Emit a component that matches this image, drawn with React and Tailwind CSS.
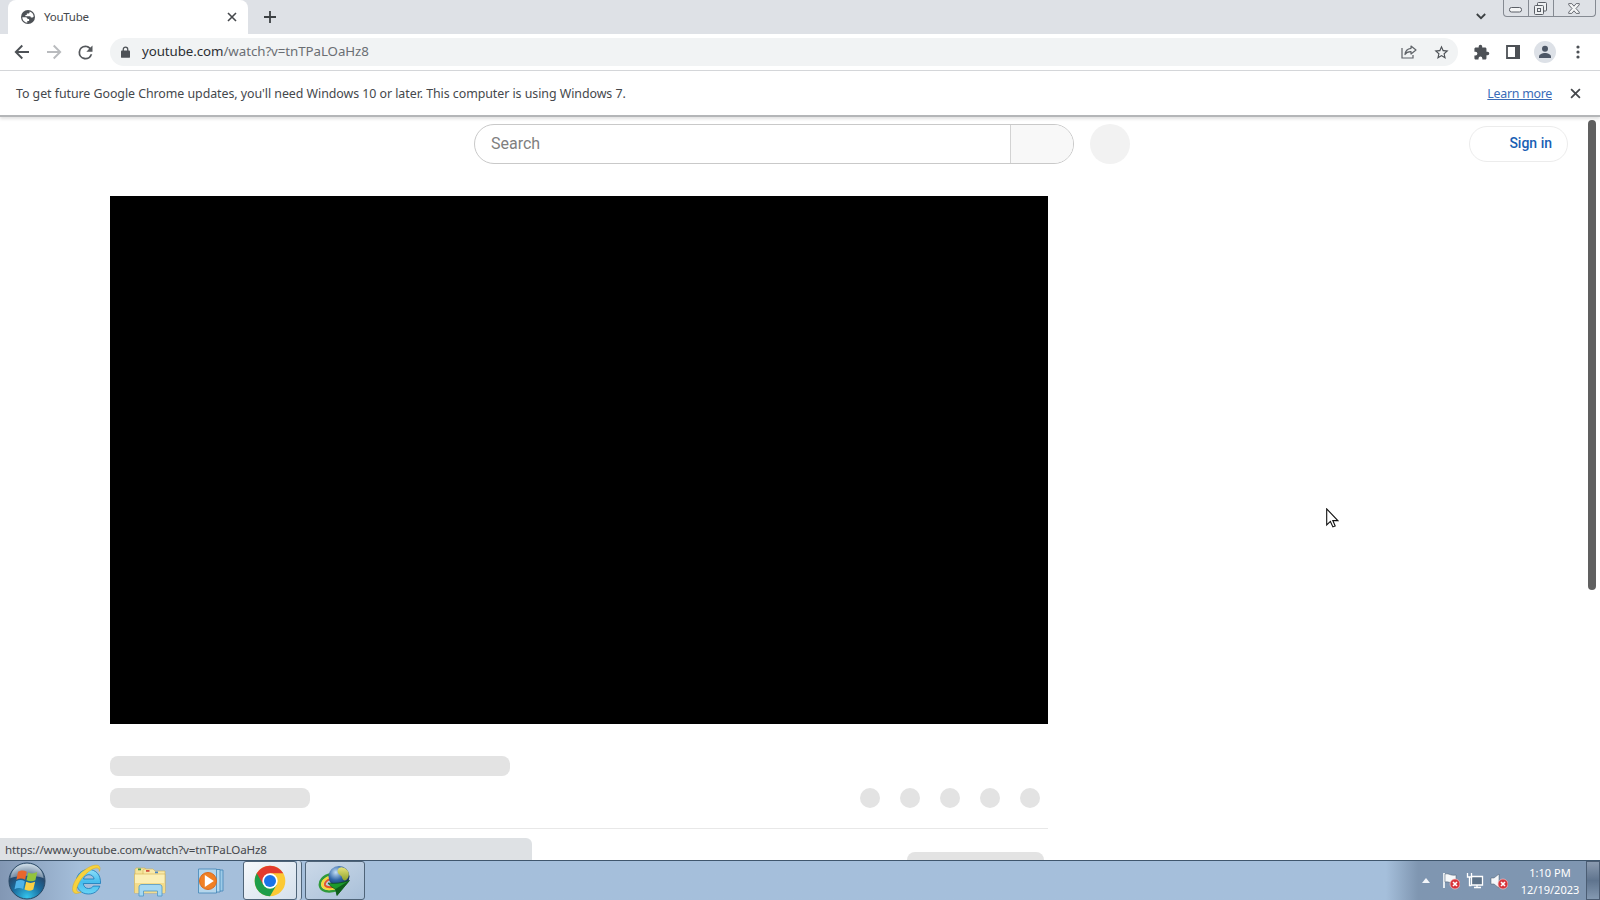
import React from 'react'

const omniText = 'whitespace-nowrap font-["Noto_Sans","Open_Sans",sans-serif]'

const GlobeIcon = () => (
  <svg viewBox="0 0 16 16" className="h-4 w-4 shrink-0">
    <circle cx="8" cy="8" r="7" fill="#4d5156" />
    <path d="M2.300 8.200h3.500c1.100 0 1.700.8 1.700 1.700h1.600v2.200H7.300v1.600C4.500 13.400 2.300 11 2.300 8.200z" fill="#fff" />
    <path d="M9.600 2.500v.7c0 .8-.6 1.300-1.400 1.300H6.800v1.400H5.400v1.400h4.200c.7 0 1.200.5 1.200 1.200h1.400c.7 0 1.200-.4 1.500-1C13.500 5 11.900 3.100 9.600 2.500z" fill="#fff" />
  </svg>
)

const BackIcon = ({ className }) => (
  <svg viewBox="0 0 16 16" className={className} fill="none" stroke="currentColor" strokeWidth="1.900">
    <path d="M15 8H2M8.300 1.500 1.800 8l6.500 6.500" />
  </svg>
)

const ReloadIcon = () => (
  <svg viewBox="0 0 24 24" className="h-[21px] w-[21px] text-[#55585c]" fill="currentColor">
    <path d="M17.650 6.350A7.958 7.958 0 0 0 12 4a8 8 0 1 0 7.730 10h-2.080A6 6 0 1 1 12 6c1.660 0 3.140.690 4.220 1.780L13 11h7V4l-2.350 2.350z" />
  </svg>
)

const LockIcon = () => (
  <svg viewBox="0 0 10 13" className="h-3 w-[9px]">
    <path d="M2.500 6V3.600a2.500 2.500 0 0 1 5 0V6" fill="none" stroke="#4d5156" strokeWidth="1.400" />
    <rect x="0" y="4.800" width="10" height="8.200" rx="1" fill="#4d5156" />
  </svg>
)

const ShareIcon = () => (
  <svg viewBox="0 0 16 14" className="h-[14px] w-4" fill="none" stroke="#5f6368" strokeWidth="1.200">
    <path d="M1 3v10h11v-3" />
    <path d="M10 1l5 4-5 4V6.600C7 6.500 5.200 7.500 4 9.500 4.300 6 6.500 3.700 10 3.300z" strokeLinejoin="round" />
  </svg>
)

const StarIcon = () => (
  <svg viewBox="0 0 24 24" className="h-[17px] w-[17px]" fill="#4d5156">
    <path d="M22 9.240l-7.190-.62L12 2 9.190 8.630 2 9.240l5.460 4.730L5.820 21 12 17.270 18.180 21l-1.630-7.030L22 9.240zM12 15.400l-3.760 2.270 1-4.280-3.320-2.880 4.380-.38L12 6.100l1.710 4.040 4.380.38-3.320 2.880 1 4.280L12 15.400z" />
  </svg>
)

const PuzzleIcon = () => (
  <svg viewBox="0 0 24 24" className="h-[17px] w-[17px]" fill="#4d5156">
    <path d="M20.500 11H19V7c0-1.100-.9-2-2-2h-4V3.500a2.500 2.500 0 0 0-5 0V5H4c-1.100 0-1.990.9-1.990 2v3.800H3.500a2.700 2.700 0 0 1 0 5.400H2V20c0 1.100.9 2 2 2h3.800v-1.500a2.700 2.700 0 0 1 5.400 0V22H17c1.100 0 2-.9 2-2v-4h1.500a2.500 2.500 0 0 0 0-5z" />
  </svg>
)

const ProfileIcon = () => (
  <svg viewBox="0 0 22 22" className="h-[22px] w-[22px]">
    <circle cx="11" cy="11" r="11" fill="#dde1e7" />
    <circle cx="11" cy="7.700" r="3" fill="#4c5665" />
    <path d="M5 17v-1.500c0-2.300 3.500-3.500 6-3.500s6 1.200 6 3.500V17z" fill="#4c5665" />
  </svg>
)

const CloseIcon = ({ className }) => (
  <svg viewBox="0 0 10 10" className={className} stroke="#45484c" strokeWidth="1.600">
    <path d="M1 1l8 8M9 1 1 9" />
  </svg>
)

const WindowControls = () => (
  <div className="flex h-[17px] w-[93px] rounded-b-[4px] border border-t-0 border-[#858a92]">
    <div className="flex w-[25px] items-center justify-center border-r border-[#858a92]">
      <svg viewBox="0 0 13 6" className="mr-px mt-1 h-[6px] w-[13px]">
        <rect x=".5" y=".5" width="12" height="4.500" rx="2" fill="#f4f5f6" stroke="#5b5f66" />
      </svg>
    </div>
    <div className="flex w-[25px] items-center justify-center border-r border-[#858a92]">
      <svg viewBox="0 0 13 13" className="mr-px h-[13px] w-[13px]" fill="#eef0f2" stroke="#5b5f66">
        <rect x="3.500" y=".5" width="9" height="8.500" rx="1" />
        <rect x=".5" y="3.500" width="9" height="9" rx="1" />
        <rect x="3.500" y="6.500" width="3" height="3" />
      </svg>
    </div>
    <div className="flex flex-1 items-center justify-center">
      <svg viewBox="0 0 12 11" className="mr-px h-[11px] w-3">
        <path d="M.7.600h3.100L6 3.200 8.200.600h3.100v1.200L8 5.500l3.300 3.700v1.200H8.200L6 7.800l-2.200 2.600H.7V9.200L4 5.500.7 1.800z" fill="#f4f5f6" stroke="#5b5f66" strokeWidth=".9" />
      </svg>
    </div>
  </div>
)

const TabStrip = () => (
  <div className="flex h-[34px] bg-[#dee1e6]">
    <div className="ml-2 flex w-[240px] items-center rounded-t-lg bg-white pl-3 pr-[11px]">
      <GlobeIcon />
      <span className={`${omniText} ml-2 flex-1 text-[11.500px] tracking-[-0.25px] text-[#45484c]`}>YouTube</span>
      <CloseIcon className="h-[10px] w-[10px]" />
    </div>
    <svg viewBox="0 0 12 12" className="ml-[16px] mt-[11px] h-3 w-3" stroke="#3c4043" strokeWidth="1.800">
      <path d="M6 0v12M0 6h12" />
    </svg>
    <div className="flex-1" />
    <svg viewBox="0 0 10 7" className="mr-[17px] mt-[13px] h-[7px] w-[10px]" fill="none" stroke="#3c4043" strokeWidth="1.800">
      <path d="M.8 1 5 5.200 9.200 1" />
    </svg>
    <WindowControls />
    <div className="w-1" />
  </div>
)

const Toolbar = () => (
  <div className="flex h-[37px] items-center border-b border-[#d5d7da] bg-white pl-[14px] pr-5">
    <BackIcon className="h-4 w-4 text-[#4d5156]" />
    <BackIcon className="ml-4 h-4 w-4 rotate-180 text-[#b9bbbe]" />
    <div className="ml-[13px]">
      <ReloadIcon />
    </div>
    <div className="ml-[14px] flex h-7 w-[1349px] items-center rounded-full bg-[#f1f3f4] pl-[11px] pr-2">
      <LockIcon />
      <span className={`${omniText} ml-[12px] flex-1 text-[13.300px] tracking-[-0.060px] text-[#6a6e73]`}>
        <span className="text-[#2c2f33]">youtube.com</span>/watch?v=tnTPaLOaHz8
      </span>
      <ShareIcon />
      <div className="ml-4">
        <StarIcon />
      </div>
    </div>
    <div className="flex flex-1 items-center pl-[15px]">
      <PuzzleIcon />
      <svg viewBox="0 0 14 14" className="ml-[16px] h-[14px] w-[14px]">
        <path d="M1 1h12v12H1z" fill="none" stroke="#4d5156" strokeWidth="1.800" />
        <path d="M9 0h5v14H9z" fill="#4d5156" />
      </svg>
      <div className="ml-[14px]">
        <ProfileIcon />
      </div>
      <svg viewBox="0 0 4 14" className="ml-5 h-[14px] w-1" fill="#4d5156">
        <circle cx="2" cy="2" r="1.600" />
        <circle cx="2" cy="7" r="1.600" />
        <circle cx="2" cy="12" r="1.600" />
      </svg>
    </div>
  </div>
)

const UpdateBar = () => (
  <div className={`${omniText} relative z-10 flex h-[46px] items-center border-b-2 border-[#b4b6b8] bg-white pl-4 pr-[19px] text-[12.400px] tracking-[-0.050px] text-[#45484c] shadow-[0_2px_3px_rgba(0,0,0,0.12)]`}>
    <span className="flex-1 pt-[2px]">
      To get future Google Chrome updates, you'll need Windows 10 or later. This computer is using Windows 7.
    </span>
    <a className="mr-[18px] pt-[2px] tracking-[-0.270px] text-[#3a6cb8] underline">Learn more</a>
    <CloseIcon className="h-[11px] w-[11px]" />
  </div>
)

const Masthead = () => (
  <div className="flex h-[79px] items-start pl-[474px] pt-[7px] font-[Roboto,sans-serif]">
    <div className="flex h-10 w-[600px] overflow-hidden rounded-full border border-[#c9c9c9]">
      <div className="flex flex-1 items-center pl-4 text-[16px] text-[#808080]">Search</div>
      <div className="w-[63px] border-l border-[#d3d3d3] bg-[#f8f8f8]" />
    </div>
    <div className="ml-4 h-10 w-10 rounded-full bg-[#f2f2f2]" />
    <div className="ml-[339px] mt-[2px] flex h-9 w-[99px] items-center justify-end rounded-full border border-[#ececec] pb-[2px] pr-[15px] text-[14px] font-medium text-[#1a5fb4]">
      Sign in
    </div>
  </div>
)

const WatchSkeleton = () => (
  <div className="ml-[110px] w-[938px]">
    <div className="h-[528px] bg-black" />
    <div className="mt-8 h-5 w-[400px] rounded-lg bg-[#e3e3e3]" />
    <div className="mt-3 flex items-center justify-between pr-2">
      <div className="h-5 w-[200px] rounded-lg bg-[#e3e3e3]" />
      <div className="flex gap-5">
        {[0, 1, 2, 3, 4].map((i) => (
          <div key={i} className="h-5 w-5 rounded-full bg-[#e3e3e3]" />
        ))}
      </div>
    </div>
    <div className="mt-5 h-px bg-[#e8e8e8]" />
    <div className="ml-[797px] mt-[23px] h-9 w-[137px] rounded-lg bg-[#e3e3e3]" />
  </div>
)

const StartOrb = () => (
  <svg viewBox="0 0 38 38" className="h-[38px] w-[38px]">
    <defs>
      <radialGradient id="orb" cx="50%" cy="95%" r="90%">
        <stop offset="0" stopColor="#35c5ec" />
        <stop offset=".45" stopColor="#1a6d9f" />
        <stop offset=".75" stopColor="#26496e" />
        <stop offset="1" stopColor="#a7bfd2" />
      </radialGradient>
    </defs>
    <circle cx="19" cy="19" r="18" fill="url(#orb)" stroke="#294763" />
    <path d="M2.500 16C4 6 12 1.800 19 1.800S34 6 35.500 16c-9-3-23-3-33 0z" fill="#fff" opacity=".38" />
    <path d="M10 9.800c3.500-2 6-1.700 8.800 0l-1.700 7.900c-2.900-1.600-5.500-1.600-8.700.1z" fill="#e8662c" />
    <path d="M20.200 10.400c2.900 1.600 5.700 1.400 9-.3l-1.800 8.100c-3 1.600-5.900 1.500-8.900 0z" fill="#93c43c" />
    <path d="M8.100 19.300c3.300-1.800 5.800-1.700 8.700 0L15.100 27c-2.900-1.500-5.500-1.500-8.600.2z" fill="#4fb2e8" />
    <path d="M18.100 19.800c3 1.500 5.900 1.500 9 0l-1.800 7.800c-3 1.600-5.800 1.500-8.800 0z" fill="#fbd044" />
  </svg>
)

const ExplorerE = () => (
  <svg viewBox="0 0 32 32" className="h-8 w-8">
    <defs>
      <linearGradient id="ie" x1="0" y1="0" x2="0" y2="1">
        <stop offset="0" stopColor="#8fe0fa" />
        <stop offset=".5" stopColor="#47bdee" />
        <stop offset="1" stopColor="#69d3f5" />
      </linearGradient>
    </defs>
    <path d="M29.500 19.500H12.300c.3 3.300 2.500 5 5.200 5 2.300 0 3.900-1 4.700-2.400h6.600C27 27.400 22.700 30 17.400 30 10.300 30 5.300 24.800 5.300 17.800S10.300 5.500 17.500 5.500c7.600 0 12.500 5.500 12 14zM12.500 15h10.600c-.4-2.700-2.500-4.300-5.200-4.300-2.800 0-4.800 1.600-5.400 4.300z" fill="url(#ie)" stroke="#1878b8" strokeWidth=".8" />
    <path d="M28.300 7.500C31 .8 25.600-.8 17.600 3.400 9 8 2.200 17 1.600 24.300c-.4 5.400 3.600 6.400 8.600 3.700-4 .8-5.200-1.200-4.100-4.800C8 17.200 13 10.500 19.600 6.200c5.200-3.300 9.200-3.200 8.700 1.300z" fill="#f7d23e" stroke="#d9a81c" strokeWidth=".5" />
  </svg>
)

const FolderIcon = () => (
  <svg viewBox="0 0 34 32" className="h-8 w-[34px]">
    <path d="M2 4.500 3 3h9l1.500 2H17v22H2z" fill="#f5e39a" stroke="#cfae55" strokeWidth=".6" />
    <path d="M10 5.500 11 4h9l2 2h10v20H10z" fill="#f8e9a8" stroke="#cfae55" strokeWidth=".6" />
    <path d="M5 3.500h3v1.800H5z" fill="#3f9a4a" />
    <path d="M13 5h3.500v1.800H13z" fill="#d1503b" />
    <path d="M22 6.500h3v1.800h-3z" fill="#4a86c4" />
    <path d="M1.500 9h30.500v19H1.500z" fill="#fbefb6" stroke="#d3b04d" strokeWidth=".6" />
    <path d="M2 18h30v9.500H2z" fill="#f4dc8a" />
    <path d="M6 31v-9c0-1.500 1-2.500 3-2.500h17c2 0 3 1 3 2.500v9h-4.500v-5h-14v5z" fill="#a5d8f2" stroke="#4f97c6" strokeWidth=".8" />
  </svg>
)

const MediaIcon = () => (
  <svg viewBox="0 0 28 28" className="h-7 w-7">
    <path d="M8 3h18v21H8z" fill="#9dcbe8" stroke="#4187b8" strokeWidth=".8" />
    <path d="M5 2.500h18V25H5z" fill="#b8daef" stroke="#4187b8" strokeWidth=".8" />
    <path d="M1.500 2h18v24h-18z" fill="#b5d6ec" stroke="#4187b8" strokeWidth=".8" />
    <circle cx="11" cy="14" r="8.500" fill="#f08024" stroke="#dc6a1c" />
    <path d="M7.800 8v12l9-6z" fill="#fff" />
  </svg>
)

const ChromeIcon = () => (
  <svg viewBox="0 0 48 48" className="h-8 w-8">
    <circle cx="24" cy="24" r="23" fill="#fcc934" />
    <path d="M24 24 4.100 12.500A23 23 0 0 0 24 47l10-17.300z" fill="#1e9e4a" />
    <path d="M4.100 12.500A23 23 0 0 1 43.900 12.500H24L14 29.700z" fill="#e33b2e" />
    <circle cx="24" cy="24" r="11.500" fill="#fff" />
    <circle cx="24" cy="24" r="9" fill="#1a73e8" />
  </svg>
)

const DownloadManagerIcon = () => (
  <svg viewBox="0 0 34 32" className="h-8 w-[34px]">
    <defs>
      <radialGradient id="globe" cx="35%" cy="30%" r="75%">
        <stop offset="0" stopColor="#c4dff6" />
        <stop offset=".5" stopColor="#3267a8" />
        <stop offset="1" stopColor="#10284f" />
      </radialGradient>
      <linearGradient id="land" x1="0" y1="0" x2="0" y2="1">
        <stop offset="0" stopColor="#e6e27a" />
        <stop offset="1" stopColor="#8ea32c" />
      </linearGradient>
    </defs>
    <path d="M13 9C5 11 1 16 2 21c1 5 8 7 17 4" fill="none" stroke="#2f9a3a" strokeWidth="2.500" />
    <path d="M13 11.500C7 13 3.500 17 4.500 20.500c1 3.500 7 4.500 13 2.500" fill="none" stroke="#f5d93a" strokeWidth="2.500" />
    <path d="M13 14c-4 1-6.500 3.500-6 6 .5 2 5 3 10 1.500" fill="none" stroke="#e2542c" strokeWidth="2" />
    <circle cx="21" cy="11.500" r="10.500" fill="url(#globe)" />
    <path d="M21 3c4-2 8 1 9.500 4 1.200 4-1 8.500-4 8.500-3-1-1.500-4-4.500-5.500-3-2-3-5-1-7z" fill="url(#land)" />
    <path d="M10 18c7 1 14 0 21.500-2.500L19 30.500 17.500 24c-3-1-5.500-3-7.500-6z" fill="#1d9a2c" stroke="#0b4f16" strokeWidth=".7" />
    <path d="M17.500 24 31.500 15.500 19 30.500z" fill="#0e5f1b" />
  </svg>
)

const RedBadge = () => (
  <>
    <circle cx="13" cy="12" r="5" fill="#d8343a" stroke="#f3c4c6" strokeWidth=".7" />
    <path d="M11 10l4 4M15 10l-4 4" stroke="#fff" strokeWidth="1.600" />
  </>
)

const Tray = () => (
  <div className="flex h-full items-center bg-gradient-to-r from-transparent to-[#7f96b1] to-15% pl-9">
    <svg viewBox="0 0 8 5" className="h-[5px] w-2">
      <path d="M4 0l4 5H0z" fill="#f3f6fa" />
    </svg>
    <svg viewBox="0 0 18 18" className="ml-3 h-[18px] w-[18px]">
      <path d="M2 1v15" stroke="#fff" strokeWidth="1.600" />
      <path d="M3 2c4-1 5 2 11 1v8c-5 1-7-2-11-1z" fill="#f6f8fa" stroke="#49586a" strokeWidth=".5" />
      <RedBadge />
    </svg>
    <svg viewBox="0 0 18 18" className="ml-[6px] h-[18px] w-[18px]" fill="none" stroke="#fff" strokeWidth="1.300">
      <path d="M5.500 4.500h11v8.500h-11z" fill="#5d7288" />
      <path d="M8 15.500h7M11 13v2.500M1.500 1v4h4V1M3.500 5v8.500h2" />
    </svg>
    <svg viewBox="0 0 18 18" className="ml-[6px] h-[18px] w-[18px]">
      <path d="M1 6h3l5-4v14l-5-4H1z" fill="#f6f8fa" stroke="#49586a" strokeWidth=".5" />
      <RedBadge />
    </svg>
    <div className={`${omniText} ml-[10px] flex w-[64px] flex-col items-center text-[11px] leading-[17px] text-white`}>
      <span>1:10 PM</span>
      <span>12/19/2023</span>
    </div>
    <div className="ml-[4px] h-full w-[14px] border border-[#4b5d73] bg-gradient-to-b from-[#8b9bb0] via-[#5f748e] to-[#8499b1]" />
  </div>
)

const Taskbar = () => (
  <div className="flex h-10 items-center border-t border-[#3f566d] bg-gradient-to-r from-[#8297b4] to-[#a5bfdb] to-5% pl-2">
    <StartOrb />
    <div className="ml-[25px] pb-px">
      <ExplorerE />
    </div>
    <div className="ml-[30px]">
      <FolderIcon />
    </div>
    <div className="ml-[30px]">
      <MediaIcon />
    </div>
    <div className="ml-[18px] flex h-[39px] w-[54px] items-center justify-center rounded-[3px] border border-[#4f6478] bg-gradient-to-br from-[#f5f8fb] to-[#d5e0ec]">
      <ChromeIcon />
    </div>
    <div className="h-[39px] w-[5px] rounded-r-[3px] border-r border-[#4f6478] bg-[#d0dce9]" />
    <div className="ml-[3px] flex h-[39px] w-[60px] items-center justify-center rounded-[3px] border border-[#4f6478] bg-gradient-to-br from-[#cbd9e8] to-[#a9c0d9]">
      <DownloadManagerIcon />
    </div>
    <div className="flex-1" />
    <Tray />
  </div>
)

export default function App() {
  return (
    <div className="relative flex h-[900px] w-[1600px] flex-col overflow-hidden bg-white">
      <TabStrip />
      <Toolbar />
      <UpdateBar />
      <div className="relative h-[743px] overflow-hidden">
        <Masthead />
        <WatchSkeleton />
        {/* scrollbar thumb */}
        <div className="absolute right-1 top-[3px] h-[470px] w-2 rounded-full bg-[#606060]" />
        {/* link status bubble */}
        <div className={`${omniText} absolute bottom-0 left-0 flex h-[22px] w-[532px] items-center rounded-tr-md bg-[#dee1e4] pl-[5px] pt-[2px] text-[11.600px] tracking-[-0.180px] text-[#45484c]`}>
          https://www.youtube.com/watch?v=tnTPaLOaHz8
        </div>
      </div>
      <Taskbar />
      <svg viewBox="0 0 13 20" className="absolute left-[1326px] top-[508px] h-5 w-[13px]">
        <path d="M.7.900v16l3.700-3.500 2.500 5.500 2.300-1-2.400-5.300h5z" fill="#fff" stroke="#111" strokeWidth="1.100" />
      </svg>
    </div>
  )
}
